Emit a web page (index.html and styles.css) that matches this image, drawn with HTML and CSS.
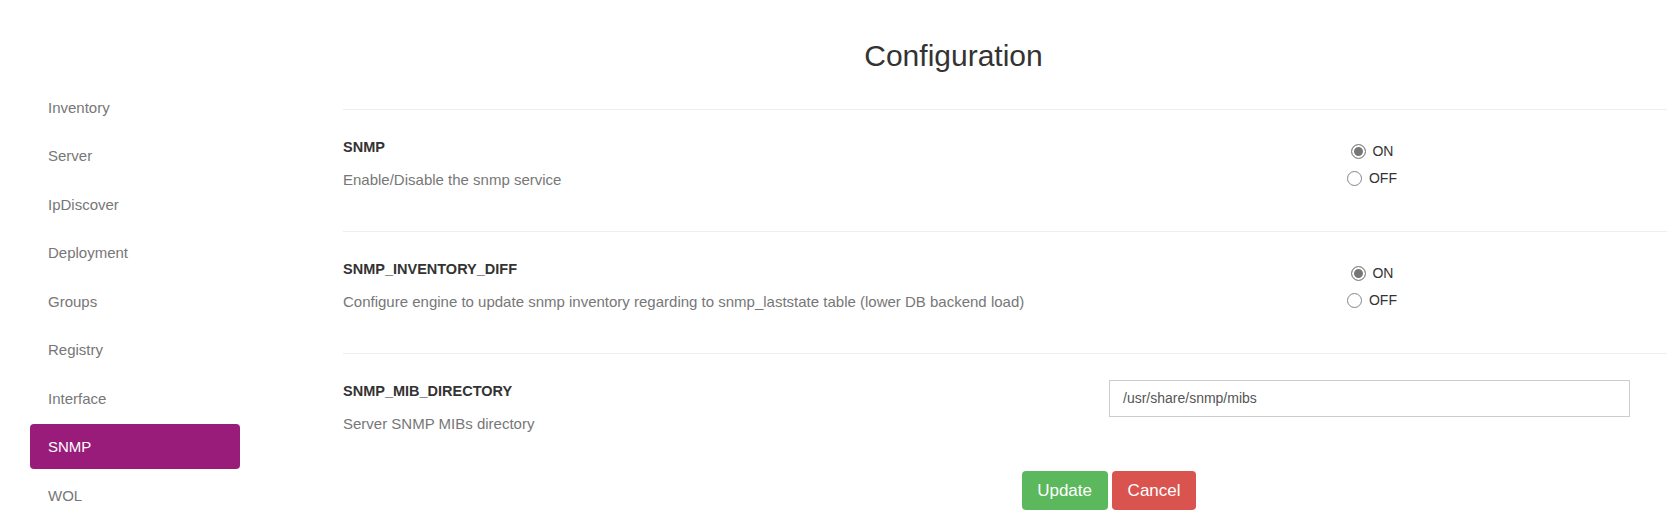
FILE: index.html
```html
<!DOCTYPE html>
<html lang="en">
<head>
<meta charset="utf-8">
<title>Configuration</title>
<link rel="stylesheet" href="styles.css">
</head>
<body>
<div class="page">
  <nav class="sidebar">
    <a class="nav-item">Inventory</a>
    <a class="nav-item">Server</a>
    <a class="nav-item">IpDiscover</a>
    <a class="nav-item">Deployment</a>
    <a class="nav-item">Groups</a>
    <a class="nav-item">Registry</a>
    <a class="nav-item">Interface</a>
    <a class="nav-item active">SNMP</a>
    <a class="nav-item">WOL</a>
  </nav>
  <main class="main">
    <h2 class="title">Configuration</h2>
    <div class="settings">
      <div class="setting">
        <div class="label">
          <div class="name">SNMP</div>
          <div class="desc">Enable/Disable the snmp service</div>
        </div>
        <div class="control radios">
          <label class="radio-line"><input type="radio" name="snmp" checked> ON</label>
          <label class="radio-line"><input type="radio" name="snmp"> OFF</label>
        </div>
      </div>
      <div class="setting">
        <div class="label">
          <div class="name">SNMP_INVENTORY_DIFF</div>
          <div class="desc">Configure engine to update snmp inventory regarding to snmp_laststate table (lower DB backend load)</div>
        </div>
        <div class="control radios">
          <label class="radio-line"><input type="radio" name="diff" checked> ON</label>
          <label class="radio-line"><input type="radio" name="diff"> OFF</label>
        </div>
      </div>
      <div class="setting last">
        <div class="label">
          <div class="name">SNMP_MIB_DIRECTORY</div>
          <div class="desc">Server SNMP MIBs directory</div>
        </div>
        <div class="control text-control">
          <input class="text-input" type="text" value="/usr/share/snmp/mibs">
        </div>
      </div>
      <div class="actions">
        <button class="btn btn-update">Update</button>
        <button class="btn btn-cancel">Cancel</button>
      </div>
    </div>
  </main>
</div>
</body>
</html>
```
FILE: styles.css
```css
html, body {
  margin: 0;
  padding: 0;
  background: #fff;
  overflow: hidden;
}
body {
  font-family: "Liberation Sans", Arial, sans-serif;
  color: #333;
}
.page {
  display: flex;
  align-items: flex-start;
}
.sidebar {
  flex: none;
  width: 210px;
  padding-left: 30px;
  padding-top: 85px;
  display: flex;
  flex-direction: column;
  gap: 3.44px;
}
.nav-item {
  height: 45px;
  display: flex;
  align-items: center;
  padding-left: 18px;
  border-radius: 4px;
  font-size: 15px;
  color: #777;
  text-decoration: none;
}
.nav-item.active {
  background: #991c7b;
  color: #fff;
}
.main {
  flex: 1;
  min-width: 0;
}
.title {
  margin: 38px 0 0;
  font-size: 30px;
  line-height: 36px;
  font-weight: normal;
  text-align: center;
  color: #333;
}
.settings {
  margin-left: 103px;
  margin-top: 35px;
}
.setting {
  display: flex;
  align-items: center;
  border-top: 1px solid #eee;
  padding: 27px 0 41px;
}
.setting.last {
  align-items: flex-start;
  padding-bottom: 37px;
}
.label {
  flex: none;
  width: 766px;
}
.name {
  font-size: 14.5px;
  line-height: 20px;
  font-weight: bold;
  color: #333;
}
.desc {
  margin-top: 13px;
  font-size: 15px;
  line-height: 20px;
  color: #777;
}
.control {
  flex: none;
  width: 521px;
}
.radios {
  display: flex;
  flex-direction: column;
  text-align: center;
  margin: 1px 0 -1px;
}
.radio-line {
  display: block;
  height: 26.5px;
  line-height: 26.5px;
  font-size: 14px;
  color: #333;
}
.radio-line input {
  appearance: none;
  -webkit-appearance: none;
  box-sizing: border-box;
  width: 15px;
  height: 15px;
  margin: 0 3px 0 5px;
  border: 1px solid #858585;
  border-radius: 50%;
  background: #fff;
  vertical-align: -3px;
}
.radio-line input:checked {
  background: #777;
  box-shadow: inset 0 0 0 2px #fff;
  border-color: #8a8a8a;
}
.text-control {
  margin-top: -1px;
}
.text-input {
  box-sizing: border-box;
  width: 521px;
  height: 36.5px;
  border: 1px solid #ccc;
  border-radius: 0;
  padding: 0 13px;
  font-family: "Liberation Sans", Arial, sans-serif;
  font-size: 14px;
  color: #555;
  outline: none;
}
.actions {
  display: flex;
  gap: 4.6px;
  padding-left: 678.7px;
}
.btn {
  border: 0;
  border-radius: 4px;
  padding: 8px 15.5px;
  font-family: "Liberation Sans", Arial, sans-serif;
  font-size: 17px;
  line-height: 23px;
  color: #fff;
  cursor: pointer;
}
.btn-update {
  background: #5cb85c;
}
.btn-cancel {
  background: #d9534f;
}
```
